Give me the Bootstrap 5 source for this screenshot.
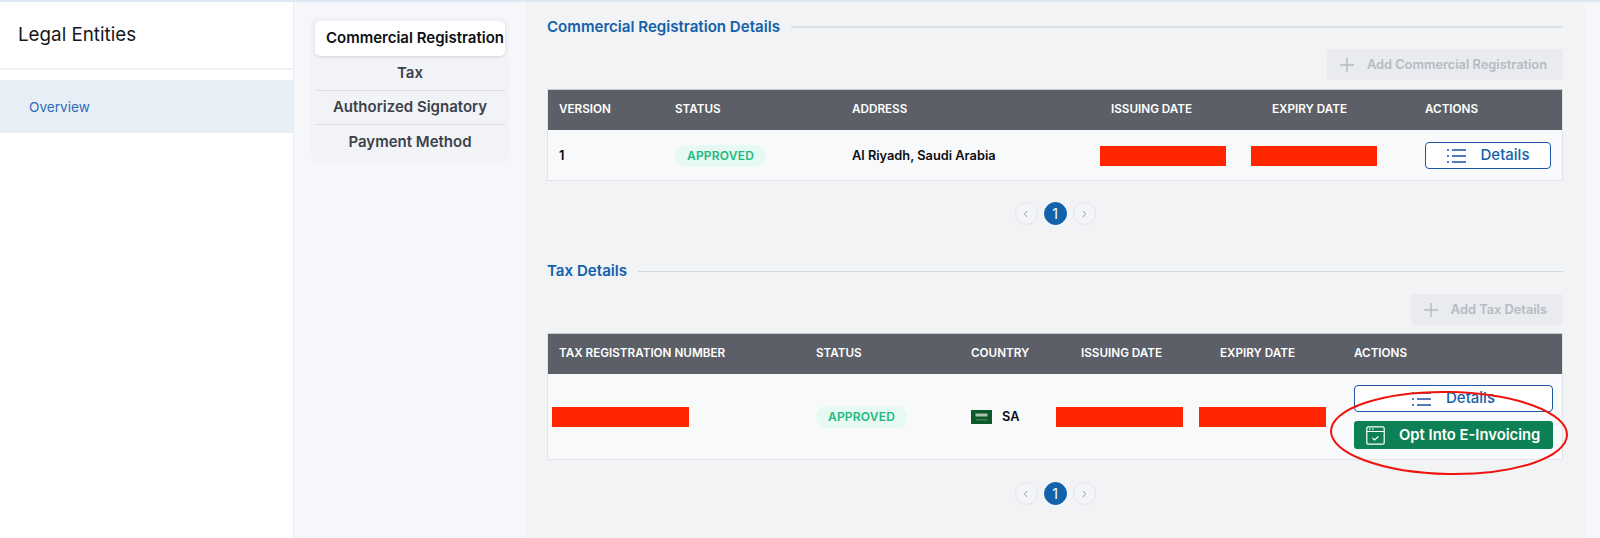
<!DOCTYPE html>
<html lang="en">
<head>
<meta charset="utf-8">
<title>Legal Entities</title>
<link href="https://cdn.jsdelivr.net/npm/bootstrap@5.3.0/dist/css/bootstrap.min.css" rel="stylesheet">
<style>
html,body{height:538px;overflow:hidden}
body{font-family:Inter,"Liberation Sans",sans-serif;background:#f5f7fa;color:#000;-webkit-font-smoothing:antialiased}
.shell{height:538px;border-top:2px solid #dfe7f3}
.side{width:294px;background:#fff;border-right:1px solid #e8ebf0;flex:none}
.side-title{height:68px;font-size:18.8px;padding:16px 0 0 18px;line-height:34px;border-bottom:2px solid #f0f1f3;margin-bottom:10px;font-weight:400;color:#14171c}
.side-item{height:53px;background:#e8eef6;color:#2f6cb8;font-size:13.6px;padding:1px 0 0 29px;display:flex;align-items:center}
.sub{width:232px;flex:none;padding:15px 17px 0 17px}
.sub-box{background:#f1f3f6;border-radius:6px;padding:4px 4px 0;height:146px}
.sub-tab{height:34.5px;display:flex;align-items:center;justify-content:center;font-weight:600;font-size:15px;color:#3c424c;border-bottom:1px solid #dee0e5;white-space:nowrap}
.sub-tab:last-child{border:0}
.sub-tab.on{background:#fff;color:#0c0f14;border:0;border-radius:5px;box-shadow:0 1px 3px rgba(0,0,0,.12);justify-content:flex-start;padding-left:11px;height:35px;overflow:hidden}
.main{width:1059px;flex:none;background:#f1f3f5;padding:12px 22px 0 21px;height:536px}
.sect-head{display:flex;align-items:center;gap:11px;height:26px;color:#1360ab;font-weight:600;font-size:15.1px}
.sect-head i{flex:1;height:2px;background:#dde0e6;display:block}
.add-row{display:flex;justify-content:flex-end;margin:9px 0 9px}
.add-btn{height:31px;background:#e9ebef;color:#b5bac3;border:0;border-radius:3px;font-size:12.8px;font-weight:600;padding:0 16px 0 13px;display:flex;align-items:center;gap:13px;opacity:1}
.grid-wrap{border:1px solid #e2e4e8;border-top-color:#c8cacf;background:#f8f9fb}
.grid-t{table-layout:fixed;width:1014px;margin:0;--bs-table-bg:transparent}
.grid-t th{background:#5c5f67;color:#fff;font-size:11.7px;font-weight:600;text-transform:uppercase;height:40px;padding:0 11px;vertical-align:middle;border:0;white-space:nowrap}
.grid-t td{font-size:12.8px;font-weight:600;padding:1px 11px 0;vertical-align:middle;border:0;color:#0b0d11;white-space:nowrap}
.pill-ok{display:inline-block;background:#e6f9f2;color:#1fb97e;font-size:12px;font-weight:600;letter-spacing:.2px;border-radius:12px;height:22px;line-height:22px;width:91px;text-align:center}
.redact{display:block;height:20px;background:#ff2600}
.act-btn{display:flex;align-items:center;justify-content:center;gap:14px;width:126px;height:27px;padding:0;border:1.5px solid #1c56a8;border-radius:4px;background:#fff;color:#1360ab;font-size:15px;font-weight:500}
.opt-btn{width:199px;height:28px;background:#0d8055;border:0;color:#fff;font-weight:600;font-size:14.8px;border-radius:3px;margin-top:9px;gap:14px;justify-content:flex-start;padding-left:12px}
.act2{width:199px}
.act2 .act-btn:first-child{width:199px}
.pager{display:flex;justify-content:center;gap:6px;height:24px;margin-top:21px}
.pg{width:23px;height:23px;border-radius:50%;border:1px solid #e4e6ea;background:#f4f5f7;display:flex;align-items:center;justify-content:center;font-size:14px;color:#9aa0a8}
.pg.on{background:#1360ab;color:#fff;border-color:#1360ab;font-weight:400}
.ring{position:absolute;left:-25px;top:4px;pointer-events:none}
.flag-r{display:flex;align-items:center;gap:10px}
</style>
</head>
<body>
<div class="shell d-flex">
  <aside class="side">
    <div class="side-title">Legal Entities</div>
    <div class="side-item">Overview</div>
  </aside>
  <nav class="sub">
    <div class="sub-box">
      <div class="sub-tab on">Commercial Registration</div>
      <div class="sub-tab">Tax</div>
      <div class="sub-tab">Authorized Signatory</div>
      <div class="sub-tab">Payment Method</div>
    </div>
  </nav>
  <main class="main">
    <div class="sect-head"><span>Commercial Registration Details</span><i></i></div>
    <div class="add-row"><button class="add-btn" type="button"><svg width="14" height="14" viewBox="0 0 14 14"><path d="M7 0v14M0 7h14" stroke="#b5bac3" stroke-width="1.4"/></svg>Add Commercial Registration</button></div>
    <div class="grid-wrap">
      <table class="table grid-t">
        <colgroup><col style="width:116px"><col style="width:177px"><col style="width:259px"><col style="width:161px"><col style="width:153px"><col></colgroup>
        <thead><tr><th>Version</th><th>Status</th><th>Address</th><th>Issuing Date</th><th>Expiry Date</th><th>Actions</th></tr></thead>
        <tbody><tr style="height:50px">
          <td>1</td>
          <td><span class="pill-ok">APPROVED</span></td>
          <td>Al Riyadh, Saudi Arabia</td>
          <td><span class="redact" style="margin-left:-11px;width:126px"></span></td>
          <td><span class="redact" style="margin-left:-21px;width:126px"></span></td>
          <td><button class="act-btn" type="button"><svg width="20" height="16" viewBox="0 0 20 16"><path d="M5 2h14M5 8h14M5 14h14" stroke="#1c4fa3" stroke-width="1.5"/><path d="M0 2h2M0 8h2M0 14h2" stroke="#1c4fa3" stroke-width="1.5"/></svg>Details</button></td>
        </tr></tbody>
      </table>
    </div>
    <div class="pager"><span class="pg"><svg width="6" height="8" viewBox="0 0 6 8"><path d="M4 1 1.5 4 4 7" fill="none" stroke="#9aa0a8"/></svg></span><span class="pg on">1</span><span class="pg"><svg width="6" height="8" viewBox="0 0 6 8"><path d="M2 1l2.500 3L2 7" fill="none" stroke="#9aa0a8"/></svg></span></div>
    <div class="sect-head" style="margin-top:32px"><span>Tax Details</span><i style="height:1px;background:#cfd8e3"></i></div>
    <div class="add-row" style="margin-top:10px;margin-bottom:8px"><button class="add-btn" type="button"><svg width="14" height="14" viewBox="0 0 14 14"><path d="M7 0v14M0 7h14" stroke="#b5bac3" stroke-width="1.4"/></svg>Add Tax Details</button></div>
    <div class="grid-wrap">
      <table class="table grid-t">
        <colgroup><col style="width:257px"><col style="width:155px"><col style="width:110px"><col style="width:139px"><col style="width:134px"><col></colgroup>
        <thead><tr><th>Tax Registration Number</th><th>Status</th><th>Country</th><th>Issuing Date</th><th>Expiry Date</th><th>Actions</th></tr></thead>
        <tbody><tr style="height:85px">
          <td><span class="redact" style="margin-left:-7px;width:137px"></span></td>
          <td><span class="pill-ok">APPROVED</span></td>
          <td><div class="flag-r"><svg width="21" height="14" viewBox="0 0 21 14"><rect width="21" height="14" fill="#0c5a2b"/><rect x="4.500" y="3.500" width="12" height="3" fill="#a9c4ae"/><rect x="5" y="9.500" width="11" height=".8" fill="#6f9c7e"/></svg>SA</div></td>
          <td><span class="redact" style="margin-left:-25px;width:127px"></span></td>
          <td><span class="redact" style="margin-left:-21px;width:127px"></span></td>
          <td><div class="act2 position-relative">
            <button class="act-btn" type="button"><svg width="20" height="16" viewBox="0 0 20 16"><path d="M5 2h14M5 8h14M5 14h14" stroke="#1c4fa3" stroke-width="1.5"/><path d="M0 2h2M0 8h2M0 14h2" stroke="#1c4fa3" stroke-width="1.5"/></svg>Details</button>
            <button class="act-btn opt-btn" type="button"><svg width="19" height="19" viewBox="0 0 19 19" fill="none" stroke="#fff" stroke-width="1.200"><rect x=".8" y=".8" width="17.400" height="17.400" rx="1.500"/><path d="M.8 5.500h17.400M3 3.200h1.500M6 3.200h1.500M6.500 12l2 2 4-3.500"/></svg>Opt Into E-Invoicing</button>
            <svg class="ring" width="242" height="88" viewBox="0 0 242 88"><ellipse cx="120" cy="44" rx="118" ry="41" fill="none" stroke="#f0120c" stroke-width="2" transform="rotate(1 120 44)"/></svg>
          </div></td>
        </tr></tbody>
      </table>
    </div>
    <div class="pager" style="margin-top:22px"><span class="pg"><svg width="6" height="8" viewBox="0 0 6 8"><path d="M4 1 1.5 4 4 7" fill="none" stroke="#9aa0a8"/></svg></span><span class="pg on">1</span><span class="pg"><svg width="6" height="8" viewBox="0 0 6 8"><path d="M2 1l2.500 3L2 7" fill="none" stroke="#9aa0a8"/></svg></span></div>
  </main>
</div>
<script src="https://cdn.jsdelivr.net/npm/bootstrap@5.3.0/dist/js/bootstrap.bundle.min.js"></script>
</body>
</html>
